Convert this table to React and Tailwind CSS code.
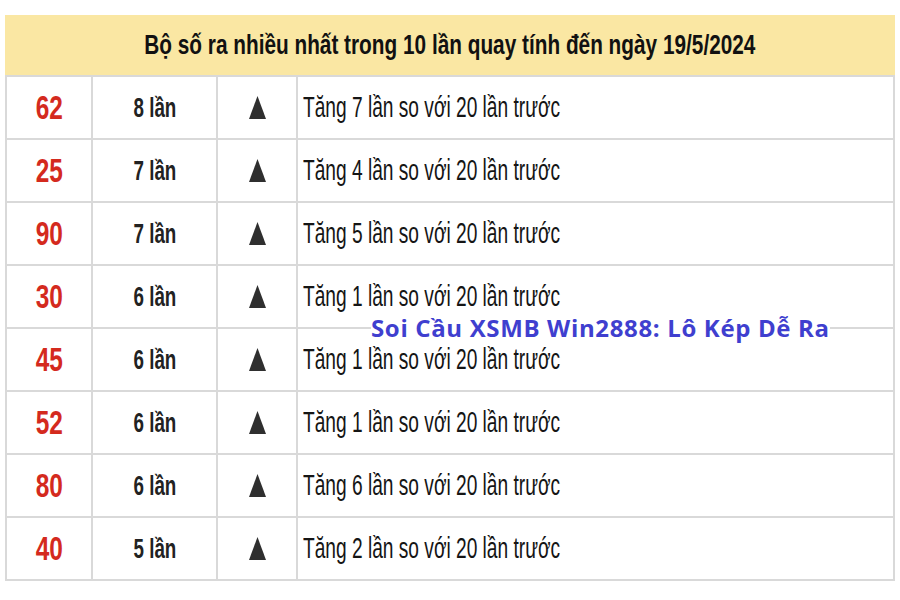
import React from 'react';

const rows = [
  { num: '62', count: '8 lần', up: 7 },
  { num: '25', count: '7 lần', up: 4 },
  { num: '90', count: '7 lần', up: 5 },
  { num: '30', count: '6 lần', up: 1 },
  { num: '45', count: '6 lần', up: 1 },
  { num: '52', count: '6 lần', up: 1 },
  { num: '80', count: '6 lần', up: 6 },
  { num: '40', count: '5 lần', up: 2 },
];

function UpArrow() {
  return (
    <svg width="17" height="23" viewBox="0 0 17 23">
      <polygon points="8.5,0 17,23 0,23" fill="#2f2f2f" />
    </svg>
  );
}

export default function App() {
  return (
    <div className="relative w-[900px] h-[600px] bg-white pt-[15px] px-[7px] font-['Liberation_Sans',Arial,sans-serif]">
      {/* Tiêu đề */}
      <div className="h-[60px] bg-[#fae7a3] flex items-center justify-center -mx-[2px]">
        <h1 className="whitespace-nowrap text-[27px] font-bold text-[#111] scale-x-[0.77]">
          Bộ số ra nhiều nhất trong 10 lần quay tính đến ngày 19/5/2024
        </h1>
      </div>

      {/* Bảng */}
      <div className="grid grid-cols-[84px_123px_78px_1fr] gap-[2px] bg-[#d9d9d9] p-[2px] -mx-[2px]">
        {rows.map((r, i) => (
          <React.Fragment key={i}>
            <div className="h-[61px] bg-white flex items-center justify-center">
              <span className="text-[33px] font-bold text-[#d42a1e] scale-x-[0.74]">{r.num}</span>
            </div>
            <div className="h-[61px] bg-white flex items-center justify-center">
              <span className="whitespace-nowrap text-[28px] font-bold text-[#222] scale-x-[0.67]">{r.count}</span>
            </div>
            <div className="h-[61px] bg-white flex items-center justify-center">
              <UpArrow />
            </div>
            <div className="h-[61px] bg-white flex items-center pl-[5px]">
              <span className="whitespace-nowrap text-[29px] text-[#151515] origin-left scale-x-[0.66]">
                Tăng {r.up} lần so với 20 lần trước
              </span>
            </div>
          </React.Fragment>
        ))}
      </div>

      {/* Watermark */}
      <div className="absolute left-[371px] top-[315px] bg-white leading-[26px] text-[24px] tracking-[0.65px] font-bold text-[#3f3fcf] font-['Open_Sans',sans-serif]">
        Soi Cầu XSMB Win2888: Lô Kép Dễ Ra
      </div>
    </div>
  );
}
